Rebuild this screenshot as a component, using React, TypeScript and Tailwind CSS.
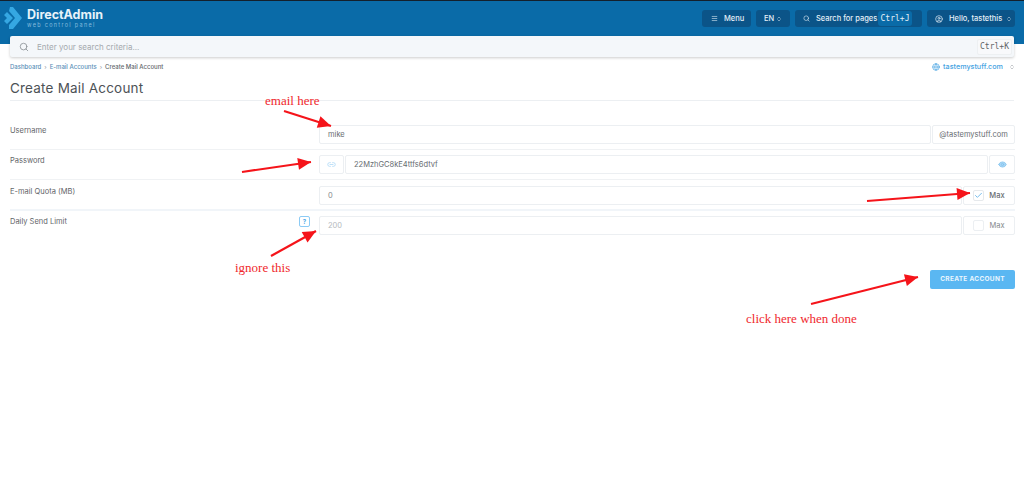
import React from 'react';
import { ChevronsUpDown, Eye, Globe, Link2, Menu, Search, UserCircle, Check } from 'lucide-react';

const arrows = [
  { x1: 284, y1: 111, x2: 331, y2: 126 },
  { x1: 242, y1: 172, x2: 311, y2: 162 },
  { x1: 867, y1: 201, x2: 970, y2: 193 },
  { x1: 271, y1: 256, x2: 316, y2: 231 },
  { x1: 811, y1: 304, x2: 918, y2: 277 },
];

function arrowHead(a: { x1: number; y1: number; x2: number; y2: number }) {
  const angle = Math.atan2(a.y2 - a.y1, a.x2 - a.x1);
  const len = 13;
  const wide = 6;
  const bx = a.x2 - Math.cos(angle) * len;
  const by = a.y2 - Math.sin(angle) * len;
  const nx = -Math.sin(angle) * wide;
  const ny = Math.cos(angle) * wide;
  return `${a.x2},${a.y2} ${bx + nx},${by + ny} ${bx - nx},${by - ny}`;
}

function TopButton({ className, children }: { className: string; children: React.ReactNode }) {
  return (
    <div className={`flex h-[17px] items-center whitespace-nowrap rounded-[3px] bg-[#0b5488] text-[7.5px] font-medium text-[#e4eff7] ${className}`}>
      {children}
    </div>
  );
}

function Row({ label, help, line, children }: { label: string; help?: boolean; line: string; children: React.ReactNode }) {
  return (
    <div className={`ml-[10px] mr-[9px] mb-[5px] flex h-[25px] ${line}`}>
      <div className="flex w-[309px] justify-between pr-[9px] text-[7.5px] text-[#5f6468]">
        <span className="pt-px leading-[10px]">{label}</span>
        {help && (
          <span className="flex h-[11px] w-[11px] items-center justify-center rounded-[2px] border-[1.5px] border-[#8ccbf5] text-[6px] font-bold leading-none text-[#4ea8e6]">
            ?
          </span>
        )}
      </div>
      <div className="flex h-[19px] flex-1 gap-px">{children}</div>
    </div>
  );
}

function Box({ className, children }: { className: string; children?: React.ReactNode }) {
  return (
    <div className={`flex h-full items-center whitespace-nowrap rounded-[2px] border border-[#eceff2] text-[7.5px] ${className}`}>
      {children}
    </div>
  );
}

export default function App() {
  return (
    <div className="relative h-[488px] w-[1024px] overflow-hidden bg-white font-['Inter',sans-serif]">
      <div className="h-px bg-[#14202c]" />
      <header className="flex h-[43px] justify-between bg-[#0a6ba8] pl-[4px] pr-[9px] pt-[9px]">
        <div className="flex h-[20px] items-start gap-[5px]">
          <svg width="18" height="22" viewBox="0 0 18 22" className="mt-[-3px]">
            <path d="M0 8 L3 5 L9 11 L3 17 L0 14 L3 11 Z" fill="#35a7e2" />
            <path d="M6 0 L9 0 L18 11 L9 22 L5 22 L5 18 L11 11 L5 4 Z" fill="#35a7e2" />
          </svg>
          <div className="mt-[-2px] flex flex-col">
            <span className="text-[12.5px] font-bold leading-[13px] text-[#e8f3fa]">DirectAdmin</span>
            <span className="text-[5.5px] leading-[8px] tracking-[1.3px] text-[#83bbdd]">web control panel</span>
          </div>
        </div>
        <div className="flex gap-[5px]">
          <TopButton className="w-[49px] gap-[6px] pl-[9px]">
            <Menu size={7} strokeWidth={2} />
            Menu
          </TopButton>
          <TopButton className="w-[34px] justify-between px-[8px]">
            EN
            <ChevronsUpDown size={6} />
          </TopButton>
          <TopButton className="w-[127px] pl-[8px]">
            <Search size={7} />
            <span className="ml-[6px] w-[57px]">Search for pages</span>
            <span className="ml-[5px] flex h-[15px] w-[34px] items-center justify-center rounded-[3px] bg-[#0a6ba8] font-['DejaVu_Sans_Mono',monospace] text-[8px]">
              Ctrl+J
            </span>
          </TopButton>
          <TopButton className="w-[88px] pl-[8px]">
            <UserCircle size={8} />
            <span className="ml-[6px] w-[53px]">Hello, tastethis</span>
            <ChevronsUpDown size={6} className="ml-[4px]" />
          </TopButton>
        </div>
      </header>

      <div className="relative mx-[10px] mt-[-8px] flex h-[21px] w-[1004px] items-center justify-between rounded-[2px] bg-[#f4f7fa] pl-[9px] pr-[2px] shadow-[0_1px_3px_rgba(0,0,0,0.2)]">
        <div className="flex items-center gap-[8px] text-[8px] text-[#a4a9ae]">
          <Search size={10} className="text-[#8b9196]" />
          Enter your search criteria...
        </div>
        <span className="flex h-[16px] w-[35px] items-center justify-center rounded-[2px] border border-[#edf0f2] bg-[#f8f9fb] font-['DejaVu_Sans_Mono',monospace] text-[8px] text-[#5f6468]">
          Ctrl+K
        </span>
      </div>

      <div className="flex items-center justify-between pl-[10px] pr-[9px] pt-[6px] text-[6px] leading-[8px]">
        <div className="flex gap-[3px] font-medium text-[#5a8fb8]">
          <span>Dashboard</span>
          <span className="text-[#a0a5aa]">›</span>
          <span>E-mail Accounts</span>
          <span className="text-[#a0a5aa]">›</span>
          <span className="text-[#61666b]">Create Mail Account</span>
        </div>
        <div className="flex items-center gap-[3px] text-[7.2px] font-medium text-[#46a3e2]">
          <Globe size={8} />
          tastemystuff.com
          <ChevronsUpDown size={6} className="ml-[3px] text-[#8b9196]" />
        </div>
      </div>

      <h1 className="mx-[10px] mt-[8px] h-[22px] border-b border-[#eceff2] text-[13.5px] font-normal leading-[18px] tracking-[0.2px] text-[#4d5256]">
        Create Mail Account
      </h1>

      <div className="h-[24px]" />

      <Row label="Username" line="border-b border-[#f0f2f4]">
        <Box className="flex-1 pl-[8px] text-[#666b70]">mike</Box>
        <Box className="w-[83px] justify-center text-[#666b70]">@tastemystuff.com</Box>
      </Row>
      <Row label="Password" line="border-b border-[#f0f2f4]">
        <Box className="w-[25px] justify-center text-[#a9d6f5]">
          <Link2 size={9} />
        </Box>
        <Box className="flex-1 pl-[8px] text-[#666b70]">22MzhGC8kE4ttfs6dtvf</Box>
        <Box className="w-[26px] justify-center text-[#7fc1ee]">
          <Eye size={9} fill="#a9d6f5" />
        </Box>
      </Row>
      <div className="h-px" />
      <Row label="E-mail Quota (MB)" line="border-b-2 border-[#f1f5f9]">
        <Box className="flex-1 pl-[8px] text-[#85898d]">0</Box>
        <Box className="w-[52px] justify-center gap-[5px] font-medium text-[#666b70]">
          <span className="flex h-[11px] w-[11px] items-center justify-center rounded-[2px] border border-[#e6e9ec]">
            <Check size={11} strokeWidth={2} color="#4ea8e6" />
          </span>
          Max
        </Box>
      </Row>
      <Row label="Daily Send Limit" help line="">
        <Box className="flex-1 pl-[8px] text-[#b4b8bc]">200</Box>
        <Box className="w-[52px] justify-center gap-[5px] text-[#85898d]">
          <span className="h-[11px] w-[11px] rounded-[2px] border border-[#eceff2]" />
          Max
        </Box>
      </Row>

      <div className="flex justify-end pr-[9px] pt-[24px]">
        <button className="flex h-[19px] w-[85px] items-center justify-center rounded-[2px] bg-[#5ab7f2] text-[6.5px] font-bold tracking-[0.3px] text-[#e8f5fe]">
          CREATE ACCOUNT
        </button>
      </div>

      <svg className="absolute left-0 top-0" width="1024" height="488">
        {arrows.map((a, i) => (
          <g key={i}>
            <line x1={a.x1} y1={a.y1} x2={a.x2} y2={a.y2} stroke="#f5141a" strokeWidth="2.2" />
            <polygon points={arrowHead(a)} fill="#f5141a" />
          </g>
        ))}
      </svg>
      <span className="absolute left-[265px] top-[94px] font-['Liberation_Serif',serif] text-[13px] leading-[14px] text-[#f0282d]">email here</span>
      <span className="absolute left-[235px] top-[261px] font-['Liberation_Serif',serif] text-[13px] leading-[14px] text-[#f0282d]">ignore this</span>
      <span className="absolute left-[746px] top-[312px] font-['Liberation_Serif',serif] text-[13px] leading-[14px] text-[#f0282d]">click here when done</span>
    </div>
  );
}
